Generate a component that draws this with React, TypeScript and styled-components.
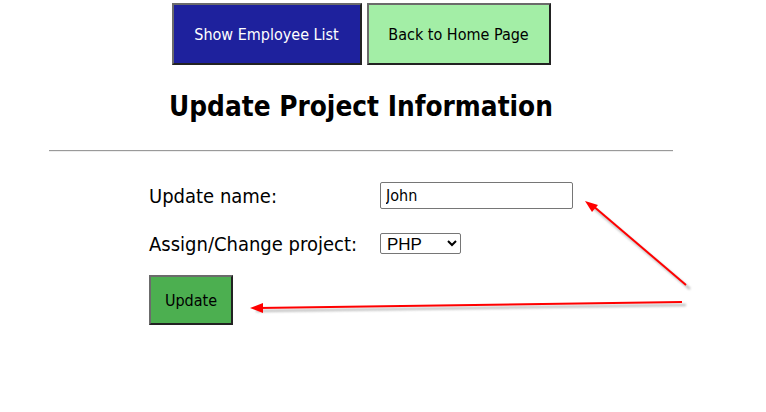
import React from "react";
import styled, { createGlobalStyle } from "styled-components";

const Global = createGlobalStyle`
  html, body { margin: 0; padding: 0; background: #fff; }
  body { font-family: "DejaVu Sans Condensed", "DejaVu Sans", sans-serif; color: #000; }
`;

const Page = styled.div`
  position: relative;
  width: 766px;
  height: 412px;
  overflow: hidden;
`;

const Container = styled.div`
  margin-left: 49px;
  width: 624px;
  display: flex;
  flex-direction: column;
`;

const NavBar = styled.div`
  display: flex;
  justify-content: center;
  gap: 5px;
  padding-top: 3px;
`;

const NavButton = styled.button<{ $bg: string; $fg: string; $w: number }>`
  width: ${(p) => p.$w}px;
  height: 62px;
  background: ${(p) => p.$bg};
  color: ${(p) => p.$fg};
  font-family: inherit;
  font-size: 16px;
  border: 2px solid;
  border-color: #6b6b6b #222 #222 #6b6b6b;
  padding: 0;
`;

const Title = styled.h1`
  margin: 26px 0 0;
  text-align: center;
  font-size: 27.7px;
  font-weight: bold;
  line-height: 32px;
`;

const Rule = styled.hr`
  margin: 27px 0 0;
  border: none;
  border-top: 1px solid #9a9a9a;
  border-bottom: 1px solid #eee;
`;

const Form = styled.div`
  padding-left: 100px;
  padding-top: 30px;
  display: flex;
  flex-direction: column;
`;

const Row = styled.div<{ $h: number; $gap: number }>`
  display: flex;
  align-items: center;
  height: ${(p) => p.$h}px;
  margin-bottom: ${(p) => p.$gap}px;
`;

const Label = styled.label`
  width: 231px;
  font-size: 20px;
  line-height: 20px;
`;

const TextInput = styled.input`
  width: 193px;
  height: 27px;
  box-sizing: border-box;
  border: 1px solid #767676;
  border-radius: 2px;
  font-family: inherit;
  font-size: 16px;
  padding: 0 5px;
`;

const Select = styled.select`
  width: 81px;
  height: 21px;
  box-sizing: border-box;
  border: 1px solid #767676;
  border-radius: 2px;
  font-family: "Liberation Sans", Arial, sans-serif;
  font-size: 17px;
  background: #fff;
  padding: 0 2px;
`;

const SubmitButton = styled.button`
  width: 84px;
  height: 50px;
  background: #4caf50;
  color: #000;
  font-family: inherit;
  font-size: 16px;
  border: 2px solid;
  border-color: #6b6b6b #222 #222 #6b6b6b;
  align-self: flex-start;
`;

const Overlay = styled.svg`
  position: absolute;
  left: 0;
  top: 0;
  pointer-events: none;
`;

export default function App() {
  return (
    <Page>
      <Global />
      <Container>
        <NavBar>
          <NavButton $bg="#1e219d" $fg="#fff" $w={190}>Show Employee List</NavButton>
          <NavButton $bg="#a3eea6" $fg="#000" $w={184}>Back to Home Page</NavButton>
        </NavBar>
        <Title>Update Project Information</Title>
        <Rule />
        <Form>
          <Row $h={27} $gap={24}>
            <Label>Update name:</Label>
            <TextInput defaultValue="John" />
          </Row>
          <Row $h={21} $gap={21}>
            <Label>Assign/Change project:</Label>
            <Select defaultValue="PHP">
              <option>PHP</option>
              <option>Java</option>
            </Select>
          </Row>
          <SubmitButton>Update</SubmitButton>
        </Form>
      </Container>
      <Overlay width="766" height="412" viewBox="0 0 766 412">
        <defs>
          <filter id="sh" x="-10%" y="-10%" width="120%" height="120%">
            <feGaussianBlur stdDeviation="1.2" />
          </filter>
        </defs>
        <g stroke="#999" strokeWidth="2.5" filter="url(#sh)" opacity="0.6">
          <line x1="590" y1="205" x2="690" y2="289" />
          <line x1="256" y1="311" x2="686" y2="305" />
        </g>
        <g stroke="#f00" strokeWidth="2" fill="#f00">
          <line x1="592" y1="205" x2="686" y2="285" />
          <line x1="258" y1="308" x2="682" y2="302" />
        </g>
        <polygon points="585,201 598,205 592,212" fill="#f00" />
        <polygon points="250,308 263,303 263,313" fill="#f00" />
      </Overlay>
    </Page>
  );
}
